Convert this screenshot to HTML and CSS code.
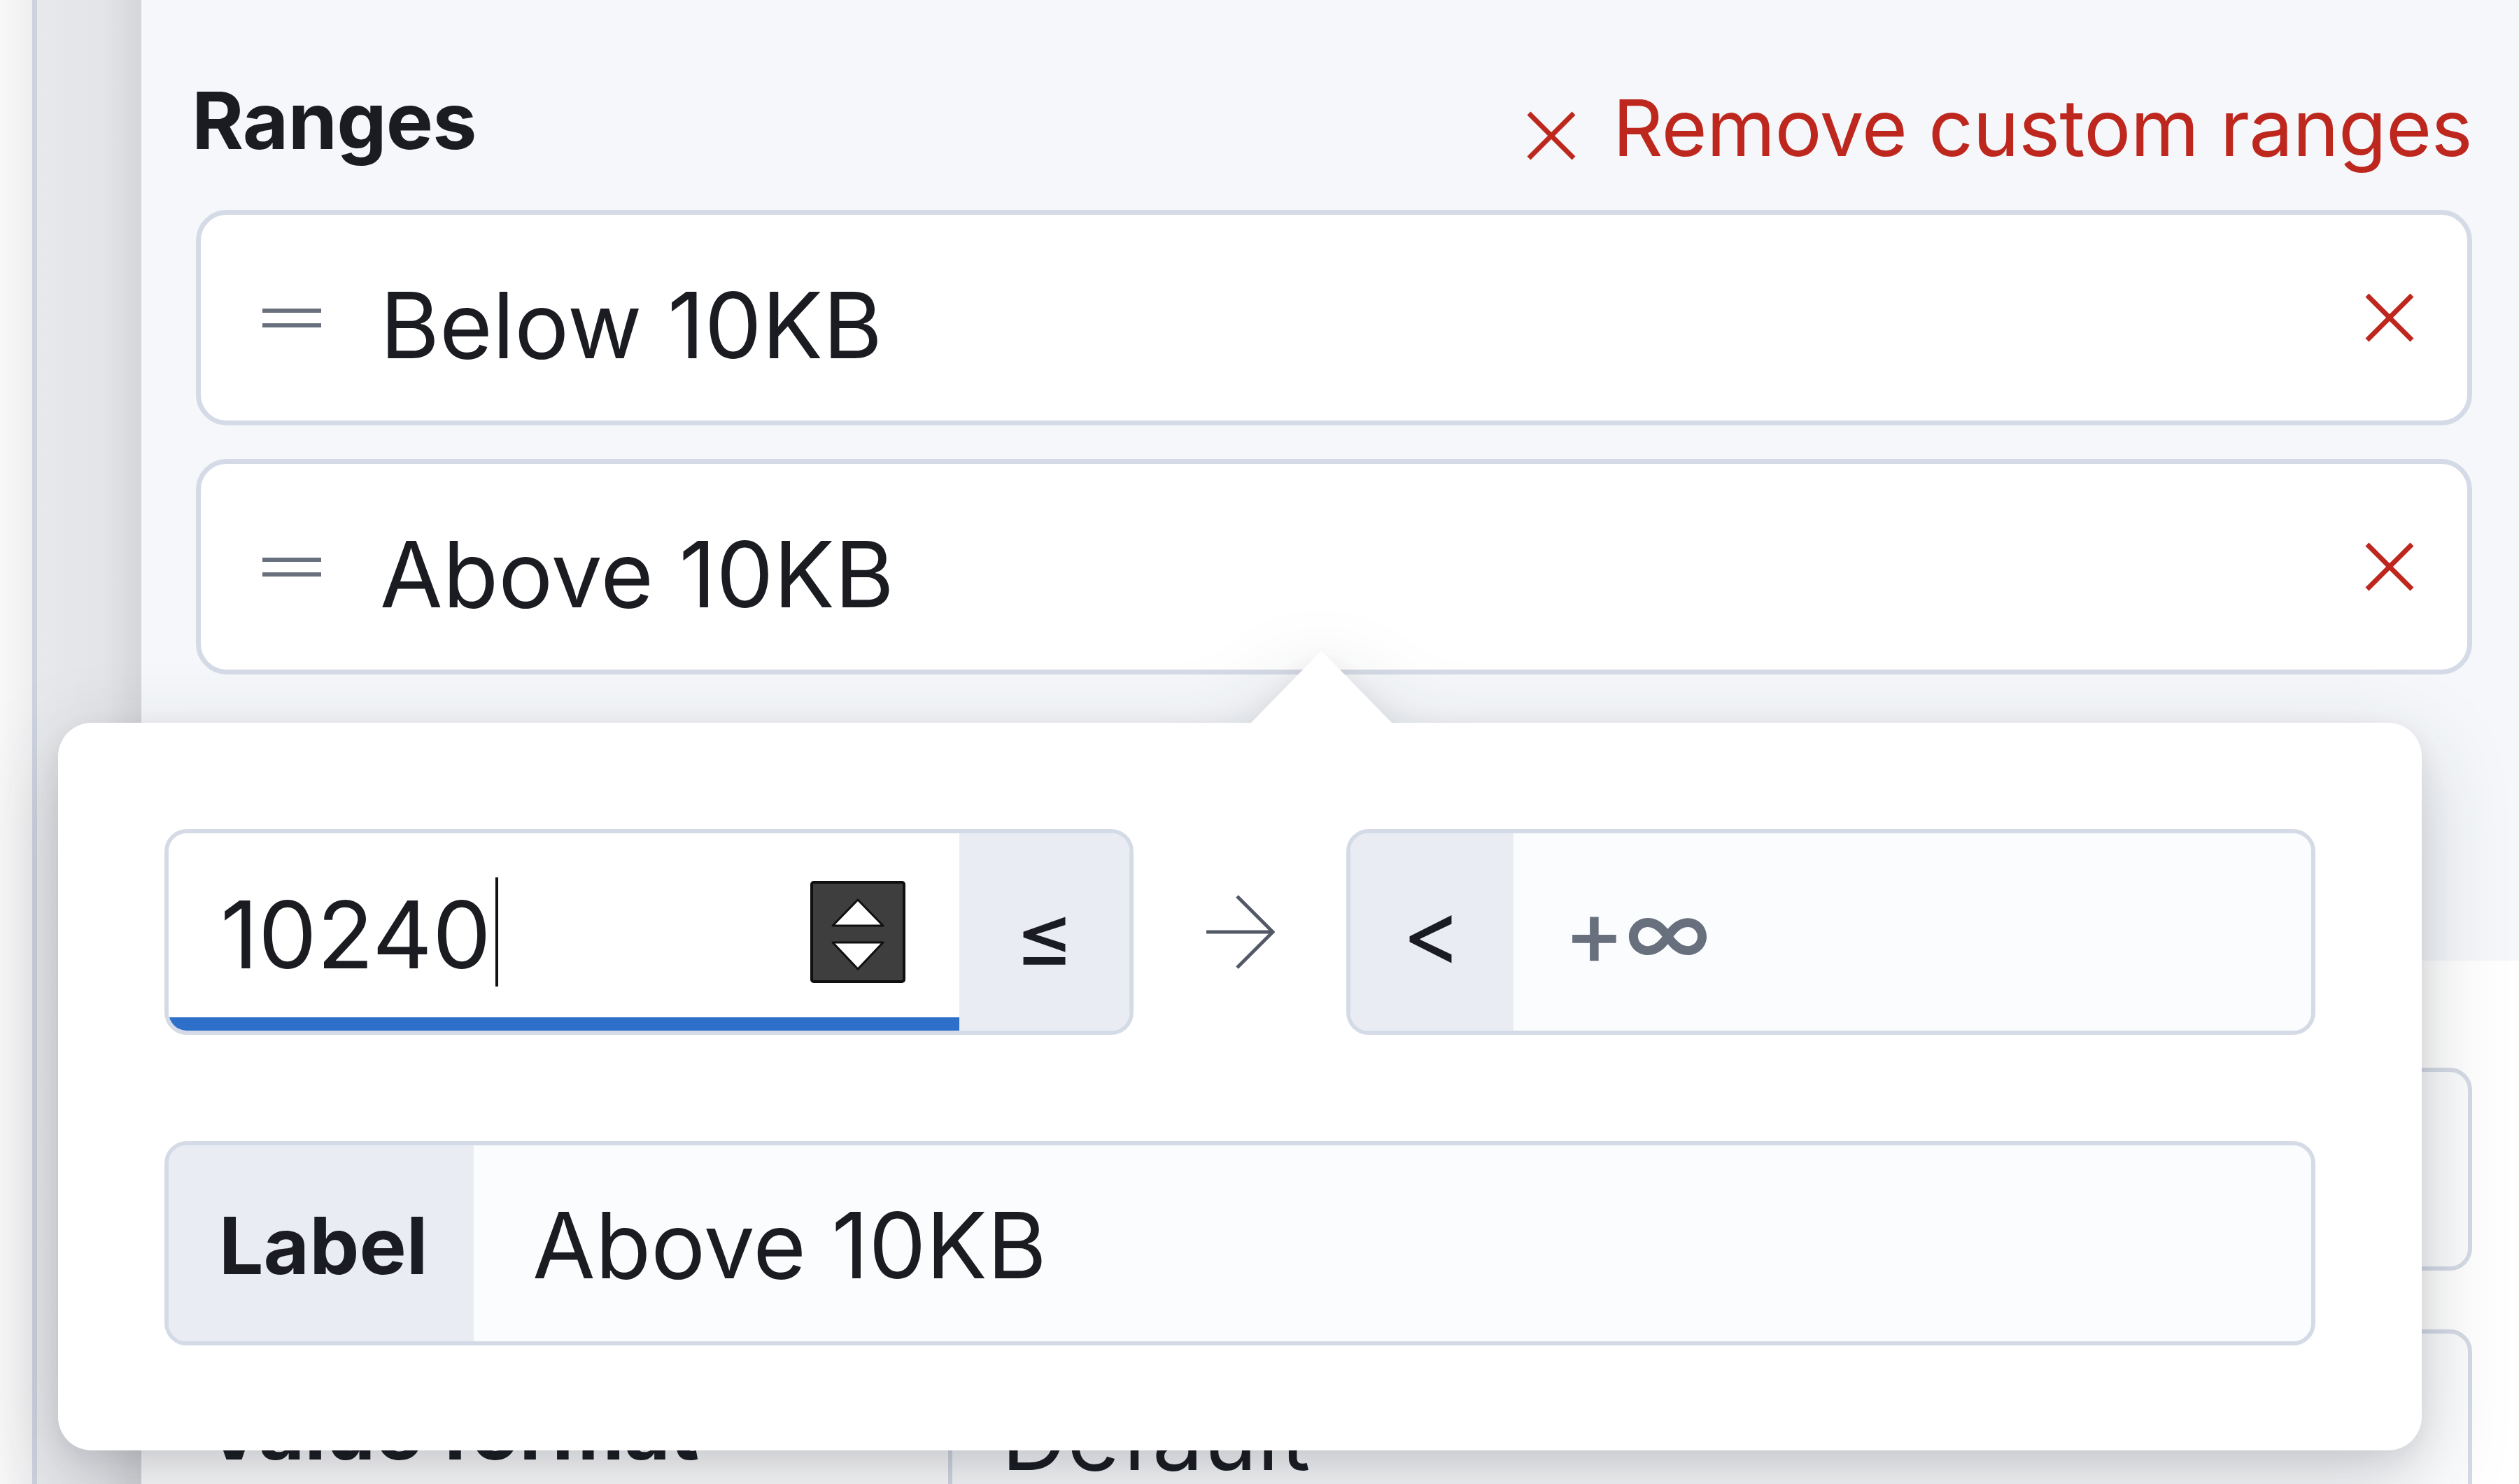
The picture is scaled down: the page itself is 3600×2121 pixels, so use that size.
FILE: index.html
```html
<!DOCTYPE html>
<html lang="en">
<head>
<meta charset="utf-8">
<title>Ranges</title>
<link rel="stylesheet" href="styles.css">
</head>
<body>
<div class="app">
  <div class="side"></div>
  <div class="gutter"></div>
  <div class="panel">
    <section class="ranges">
      <div class="ranges-head">
        <h2 class="title">Ranges</h2>
        <button class="remove-link" type="button">
          <svg class="remove-x" width="72" height="72" viewBox="0 0 72 72" aria-hidden="true"><path d="M4 4 L68 68 M68 4 L4 68" stroke="#bd271e" stroke-width="7" fill="none"/></svg>
          <span>Remove custom ranges</span>
        </button>
      </div>
      <div class="range-list">
        <div class="range-row">
          <span class="handle"></span>
          <span class="range-label">Below 10KB</span>
          <svg class="row-x" width="72" height="72" viewBox="0 0 72 72" aria-hidden="true"><path d="M4 4 L68 68 M68 4 L4 68" stroke="#bd271e" stroke-width="7" fill="none"/></svg>
        </div>
        <div class="range-row">
          <span class="handle"></span>
          <span class="range-label">Above 10KB</span>
          <svg class="row-x" width="72" height="72" viewBox="0 0 72 72" aria-hidden="true"><path d="M4 4 L68 68 M68 4 L4 68" stroke="#bd271e" stroke-width="7" fill="none"/></svg>
        </div>
      </div>
    </section>
    <section class="appearance">
      <div class="form-row">
        <div class="form-label"></div>
        <div class="form-field"></div>
      </div>
      <div class="form-row">
        <div class="form-label">Value format</div>
        <div class="form-field select">Default</div>
      </div>
    </section>
  </div>

  <div class="popover">
    <div class="pop-range">
      <div class="field from">
        <div class="input focused">
          <span class="value">10240</span><span class="caret"></span>
          <svg class="spinner" width="136" height="146" viewBox="0 0 136 146" aria-hidden="true">
            <rect x="2" y="2" width="132" height="142" rx="3" fill="#3e3e3e" stroke="#0f0f0f" stroke-width="4"/>
            <path d="M68 27 L104 64 L32 64 Z" fill="#fff" stroke="#0f0f0f" stroke-width="3" stroke-linejoin="round"/>
            <path d="M32 88 L104 88 L68 126 Z" fill="#fff" stroke="#0f0f0f" stroke-width="3" stroke-linejoin="round"/>
          </svg>
        </div>
        <div class="addon append">≤</div>
      </div>
      <div class="arrow-sep">
        <svg width="100" height="106" viewBox="0 0 100 106" aria-hidden="true"><path d="M2 53 H96 M46 2 L97 53 L46 104" stroke="#535966" stroke-width="5" fill="none"/></svg>
      </div>
      <div class="field to">
        <div class="addon prepend">&lt;</div>
        <div class="input muted"><span class="placeholder">+∞</span></div>
      </div>
    </div>
    <div class="pop-label field">
      <div class="addon label-addon">Label</div>
      <div class="input muted"><span class="value">Above 10KB</span></div>
    </div>
  </div>
</div>
</body>
</html>
```

FILE: styles.css
```css
* { box-sizing: border-box; }

html, body {
  margin: 0;
  padding: 0;
}

body {
  width: 3600px;
  height: 2121px;
  overflow: hidden;
  background: #f7f7f8;
  color: #1a1c21;
  font-family: Inter, "Noto Sans", "Liberation Sans", sans-serif;
}

.app {
  position: relative;
  display: flex;
  width: 3600px;
  height: 2121px;
  overflow: hidden;
}

.side {
  flex: none;
  width: 46px;
  background: linear-gradient(to right, #f8f8f8, #efeff0);
}

.gutter {
  flex: none;
  width: 156px;
  border-left: 7px solid #ccd3df;
  background: linear-gradient(to right, #e8e9ec 0%, #e3e4e7 65%, #d5d6d9 100%);
}

.panel {
  flex: 1;
  min-width: 0;
  display: flex;
  flex-direction: column;
}

/* ---------- Ranges section ---------- */
.ranges {
  flex: none;
  height: 1373px;
  background: #f5f7fa;
  padding: 104px 67px 0 78px;
}

.ranges-head {
  display: flex;
  justify-content: space-between;
  align-items: flex-start;
  margin-bottom: 50px;
}

.title {
  margin: 0 0 0 -6px;
  font-size: 113px;
  line-height: 136px;
  font-weight: 700;
  letter-spacing: -0.8px;
  color: #1a1c21;
}

.remove-link {
  margin-top: 10px;
  display: flex;
  align-items: center;
  gap: 52px;
  padding: 0;
  border: 0;
  background: none;
  color: #bd271e;
  font-family: Inter, "Noto Sans", "Liberation Sans", sans-serif;
  font-size: 112px;
  line-height: 136px;
  font-weight: 400;
  letter-spacing: -0.7px;
}

.remove-x { margin-top: 24px; flex: none; }

.range-list {
  display: flex;
  flex-direction: column;
  gap: 48px;
}

.range-row {
  height: 308px;
  display: flex;
  align-items: center;
  padding: 0 75px 0 88px;
  background: #fff;
  border: 7px solid #d5dbe6;
  border-radius: 44px;
}

.handle {
  flex: none;
  width: 84px;
  height: 27px;
  border-top: 6px solid #69707d;
  border-bottom: 6px solid #69707d;
}

.range-label {
  flex: 1;
  margin-left: 84px;
  padding-top: 22px;
  font-size: 130px;
  line-height: 156px;
  color: #1a1c21;
}

.row-x { flex: none; }

/* ---------- Appearance section ---------- */
.appearance {
  flex: 1;
  min-height: 0;
  background: #fff;
  padding: 153px 67px 0 78px;
}

.form-row {
  display: flex;
  align-items: center;
  height: 290px;
  margin-bottom: 84px;
}

.form-row:last-child { margin-bottom: 0; }

.form-label {
  flex: none;
  width: 1075px;
  padding-left: 12px;
  font-size: 113px;
  line-height: 136px;
  font-weight: 700;
  color: #1a1c21;
}

.form-field {
  flex: 1;
  align-self: stretch;
  display: flex;
  align-items: center;
  background: #fbfcfd;
  border: 6px solid #d5dbe6;
  border-radius: 32px;
}

.form-field.select {
  padding-left: 70px;
  padding-top: 18px;
  font-size: 130px;
  line-height: 136px;
}

/* ---------- Popover ---------- */
.popover {
  position: absolute;
  left: 83px;
  top: 1033px;
  width: 3378px;
  height: 1040px;
  padding: 152px;
  background: #fff;
  border-radius: 48px;
  filter: drop-shadow(0 40px 60px rgba(20, 25, 40, 0.2)) drop-shadow(0 10px 18px rgba(20, 25, 40, 0.07));
}

.popover::before {
  content: "";
  position: absolute;
  left: 1704px;
  top: -103px;
  width: 203px;
  height: 104px;
  background: #fff;
  clip-path: polygon(50% 0, 100% 100%, 0 100%);
}

.pop-range {
  display: flex;
  align-items: center;
  height: 294px;
}

.field {
  display: flex;
  height: 294px;
  border: 6px solid #d5dbe6;
  border-radius: 32px;
  overflow: hidden;
}

.field.from,
.field.to {
  flex: 1;
  min-width: 0;
}

.input {
  flex: 1;
  min-width: 0;
  display: flex;
  align-items: center;
  font-size: 130px;
  line-height: 156px;
  color: #1a1c21;
}

.input.focused {
  background: #fff;
  padding: 0 77px 0 74px;
  font-size: 133px;
  box-shadow: inset 0 -19px 0 #2e6fca;
}

.input.focused .value { padding-top: 8px; }

.input.muted {
  background: #fbfcfd;
  padding-left: 72px;
}

.caret {
  width: 4px;
  height: 156px;
  margin-left: 6px;
  background: #111;
}

.spinner {
  flex: none;
  margin-left: auto;
}

.addon {
  flex: none;
  display: flex;
  align-items: center;
  justify-content: center;
  background: #e9edf3;
  font-size: 130px;
  line-height: 156px;
  color: #1a1c21;
}

.append { width: 243px; padding-top: 8px; }
.prepend { width: 233px; }

.placeholder {
  color: #69707d;
  font-weight: 500;
}

.arrow-sep {
  flex: none;
  width: 128px;
  margin: 0 88px;
  display: flex;
  justify-content: center;
}

.pop-label {
  margin-top: 152px;
  height: 292px;
}

.label-addon {
  width: 436px;
  font-size: 113px;
  line-height: 136px;
  font-weight: 700;
  padding-left: 6px;
  padding-top: 6px;
}

.pop-label .input.muted { padding-left: 84px; padding-top: 6px; }
```
